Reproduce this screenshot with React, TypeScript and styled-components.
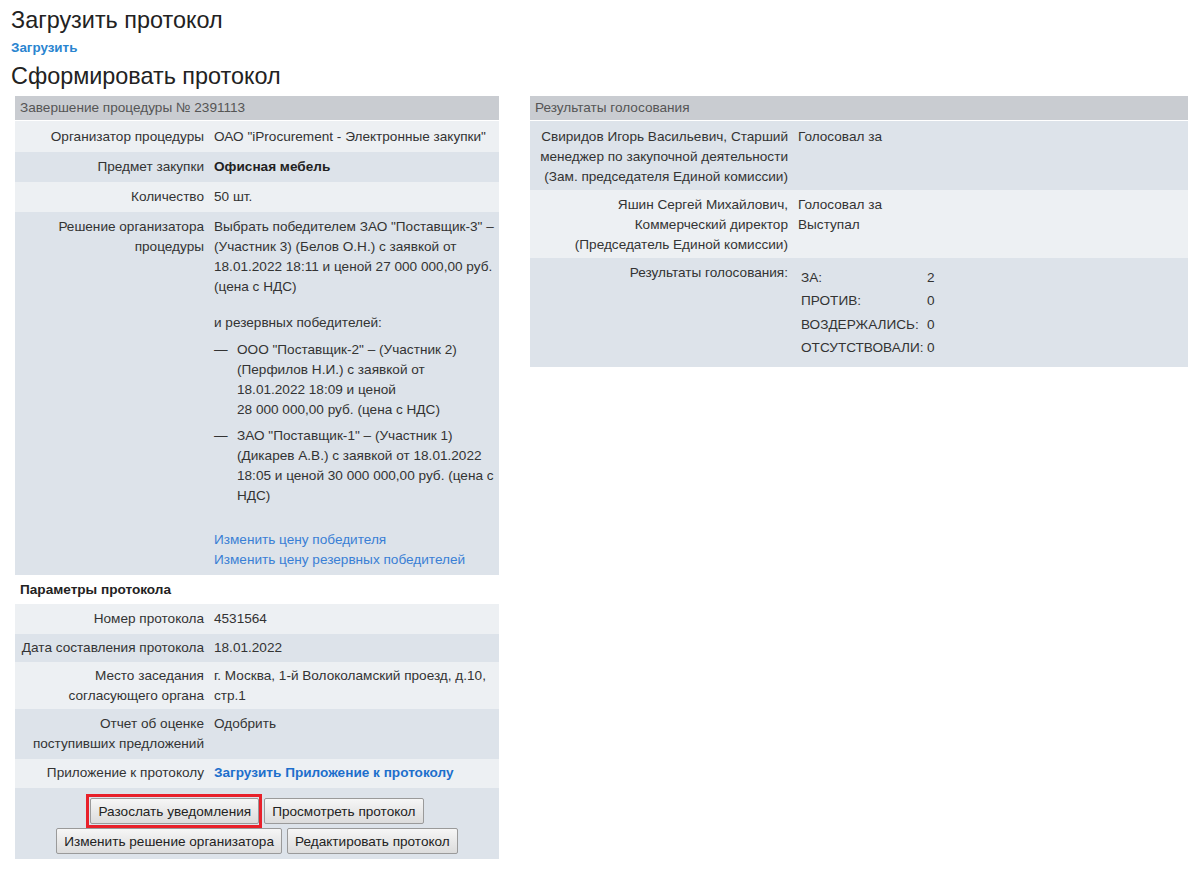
import React from 'react';
import styled, { createGlobalStyle } from 'styled-components';

const GlobalStyle = createGlobalStyle`
  html, body {
    margin: 0;
    padding: 0;
    background: #ffffff;
  }
  body {
    font-family: "Liberation Sans", Arial, sans-serif;
    font-size: 13.6px;
    color: #333333;
  }
`;

const colors = {
  head: '#c9ccd1',
  light: '#edf0f3',
  dark: '#dde3ea',
  link: '#3a7fd5',
  strongLink: '#1d6fcc',
};

const Page = styled.div`
  padding: 6px 12px 20px 0;
`;

const Title = styled.h1`
  margin: 0;
  padding-left: 11px;
  font-size: 23.4px;
  font-weight: normal;
  line-height: 28px;
  color: #222222;
`;

const UploadLink = styled.a`
  display: block;
  padding-left: 11px;
  margin: 5px 0 5px;
  font-size: 13.4px;
  font-weight: bold;
  line-height: 18px;
  color: #2a85d0;
  text-decoration: none;
  cursor: pointer;
`;

const Columns = styled.div`
  display: flex;
  align-items: flex-start;
  gap: 31px;
  padding-left: 15px;
  margin-top: 6px;
`;

const Table = styled.div<{ $width: number }>`
  width: ${({ $width }) => $width}px;
  flex-shrink: 0;
`;

const TableHead = styled.div`
  background: ${colors.head};
  color: #555555;
  height: 24px;
  line-height: 24px;
  padding-left: 5px;
  margin-bottom: 1px;
`;

const Row = styled.div<{ $label: number; $dark?: boolean }>`
  display: grid;
  grid-template-columns: ${({ $label }) => $label}px 1fr;
  background: ${({ $dark }) => ($dark ? colors.dark : colors.light)};
  line-height: 20px;
`;

const Label = styled.div<{ $top?: number; $bottom?: number }>`
  text-align: right;
  padding: ${({ $top }) => $top ?? 5}px 5px ${({ $bottom }) => $bottom ?? 5}px 0;
`;

const Value = styled.div<{ $top?: number; $bottom?: number }>`
  padding: ${({ $top }) => $top ?? 5}px 5px ${({ $bottom }) => $bottom ?? 5}px 5px;
`;

const Strong = styled.span`
  font-weight: bold;
  color: #222222;
`;

const Paragraph = styled.div<{ $gap?: number }>`
  margin-top: ${({ $gap }) => $gap ?? 0}px;
`;

const Reserve = styled.ul`
  list-style: none;
  margin: 7px 0 0;
  padding: 0;
  display: flex;
  flex-direction: column;
  gap: 6px;
`;

const ReserveItem = styled.li`
  display: flex;
`;

const Dash = styled.span`
  width: 23px;
  flex-shrink: 0;
`;

const Links = styled.div`
  margin-top: 24px;
  display: flex;
  flex-direction: column;
`;

const TextLink = styled.a<{ $bold?: boolean }>`
  color: ${({ $bold }) => ($bold ? colors.strongLink : colors.link)};
  font-weight: ${({ $bold }) => ($bold ? 'bold' : 'normal')};
  text-decoration: none;
  cursor: pointer;
`;

const Section = styled.div`
  font-weight: bold;
  color: #222222;
  height: 29px;
  line-height: 29px;
  padding-left: 5px;
`;

const ButtonsCell = styled.div`
  background: ${colors.dark};
  padding: 10px 0 5px;
  display: flex;
  flex-direction: column;
  align-items: center;
  gap: 4px;
`;

const ButtonLine = styled.div`
  display: flex;
  gap: 5px;
`;

const Button = styled.button<{ $marked?: boolean }>`
  position: relative;
  height: 26px;
  padding: 0 7px;
  font-family: "Liberation Sans", Arial, sans-serif;
  font-size: 13.6px;
  color: #222222;
  background: linear-gradient(#f6f6f6, #dcdcdc);
  border: 1px solid #9a9a9a;
  border-radius: 2px;
  cursor: pointer;

  ${({ $marked }) =>
    $marked &&
    `
    &::after {
      content: '';
      position: absolute;
      inset: -5px -4px -5px -5px;
      border: 3px solid #e8202a;
      pointer-events: none;
    }
  `}
`;

const Votes = styled.div`
  display: grid;
  grid-template-columns: 126px auto;
  justify-content: start;
  padding: 3px 0 3px;
  line-height: 23.3px;
`;

const VoteCell = styled.div`
  padding-left: 3px;
`;

const LEFT = 194;
const RIGHT = 263;

const voteTotals: [string, number][] = [
  ['ЗА:', 2],
  ['ПРОТИВ:', 0],
  ['ВОЗДЕРЖАЛИСЬ:', 0],
  ['ОТСУТСТВОВАЛИ:', 0],
];

const App: React.FC = () => {
  return (
    <>
      <GlobalStyle />
      <Page>
        <Title>Загрузить протокол</Title>
        <UploadLink>Загрузить</UploadLink>
        <Title>Сформировать протокол</Title>
        <Columns>
          <Table $width={484}>
            <TableHead>Завершение процедуры № 2391113</TableHead>
            <Row $label={LEFT}>
              <Label $top={6}>Организатор процедуры</Label>
              <Value $top={6}>ОАО "iProcurement - Электронные закупки"</Value>
            </Row>
            <Row $label={LEFT} $dark>
              <Label>Предмет закупки</Label>
              <Value>
                <Strong>Офисная мебель</Strong>
              </Value>
            </Row>
            <Row $label={LEFT}>
              <Label>Количество</Label>
              <Value>50 шт.</Value>
            </Row>
            <Row $label={LEFT} $dark>
              <Label>Решение организатора процедуры</Label>
              <Value>
                <Paragraph>
                  Выбрать победителем ЗАО "Поставщик-3" – (Участник 3) (Белов О.Н.) с заявкой от
                  18.01.2022 18:11 и ценой 27 000 000,00 руб. (цена с НДС)
                </Paragraph>
                <Paragraph $gap={16}>и резервных победителей:</Paragraph>
                <Reserve>
                  <ReserveItem>
                    <Dash>—</Dash>
                    <span>
                      ООО "Поставщик-2" – (Участник 2) (Перфилов Н.И.) с заявкой от
                      <br />
                      18.01.2022 18:09 и ценой
                      <br />
                      28 000 000,00 руб. (цена с НДС)
                    </span>
                  </ReserveItem>
                  <ReserveItem>
                    <Dash>—</Dash>
                    <span>
                      ЗАО "Поставщик-1" – (Участник 1) (Дикарев А.В.) с заявкой от 18.01.2022
                      18:05 и ценой 30 000 000,00 руб. (цена с НДС)
                    </span>
                  </ReserveItem>
                </Reserve>
                <Links>
                  <TextLink>Изменить цену победителя</TextLink>
                  <TextLink>Изменить цену резервных победителей</TextLink>
                </Links>
              </Value>
            </Row>
            <Section>Параметры протокола</Section>
            <Row $label={LEFT}>
              <Label>Номер протокола</Label>
              <Value>4531564</Value>
            </Row>
            <Row $label={LEFT} $dark>
              <Label $top={4} $bottom={4}>Дата составления протокола</Label>
              <Value $top={4} $bottom={4}>18.01.2022</Value>
            </Row>
            <Row $label={LEFT}>
              <Label $top={4} $bottom={3}>Место заседания согласующего органа</Label>
              <Value $top={4} $bottom={3}>г. Москва, 1-й Волоколамский проезд, д.10, стр.1</Value>
            </Row>
            <Row $label={LEFT} $dark>
              <Label>
                Отчет об оценке
                <br />
                поступивших предложений
              </Label>
              <Value>Одобрить</Value>
            </Row>
            <Row $label={LEFT}>
              <Label $top={4}>Приложение к протоколу</Label>
              <Value $top={4}>
                <TextLink $bold>Загрузить Приложение к протоколу</TextLink>
              </Value>
            </Row>
            <ButtonsCell>
              <ButtonLine>
                <Button $marked>Разослать уведомления</Button>
                <Button>Просмотреть протокол</Button>
              </ButtonLine>
              <ButtonLine>
                <Button>Изменить решение организатора</Button>
                <Button>Редактировать протокол</Button>
              </ButtonLine>
            </ButtonsCell>
          </Table>

          <Table $width={658}>
            <TableHead>Результаты голосования</TableHead>
            <Row $label={RIGHT} $dark>
              <Label $top={6} $bottom={3}>
                Свиридов Игорь Васильевич, Старший
                <br />
                менеджер по закупочной деятельности
                <br />
                (Зам. председателя Единой комиссии)
              </Label>
              <Value $top={6} $bottom={3}>Голосовал за</Value>
            </Row>
            <Row $label={RIGHT}>
              <Label $top={5} $bottom={3}>
                Яшин Сергей Михайлович,
                <br />
                Коммерческий директор
                <br />
                (Председатель Единой комиссии)
              </Label>
              <Value $top={5} $bottom={3}>
                Голосовал за
                <br />
                Выступал
              </Value>
            </Row>
            <Row $label={RIGHT} $dark>
              <Label $top={5}>Результаты голосования:</Label>
              <Value $top={5}>
                <Votes>
                  {voteTotals.map(([name, count]) => (
                    <React.Fragment key={name}>
                      <VoteCell>{name}</VoteCell>
                      <VoteCell>{count}</VoteCell>
                    </React.Fragment>
                  ))}
                </Votes>
              </Value>
            </Row>
          </Table>
        </Columns>
      </Page>
    </>
  );
};

export default App;
